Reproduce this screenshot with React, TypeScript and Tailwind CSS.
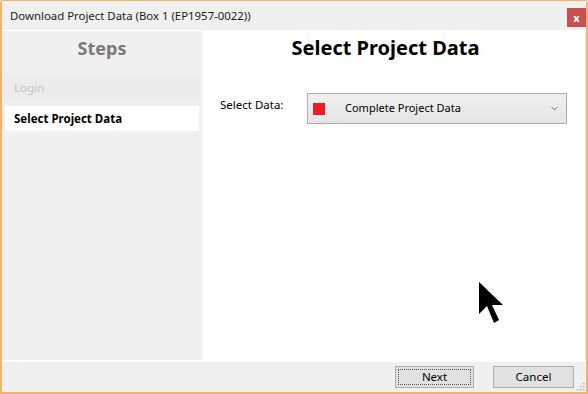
import { ChevronDown } from "lucide-react";

const font = { fontFamily: '"Noto Sans", "Open Sans", sans-serif' };

function Cursor() {
  return (
    <svg
      className="absolute left-[477px] top-[281px]"
      width="26"
      height="42"
      viewBox="0 0 26 42"
    >
      <polygon
        points="0,0 0,32 8,24 15,41 20,38 13,23 24,23"
        fill="#000"
      />
    </svg>
  );
}

export default function App() {
  return (
    <div
      className="relative flex h-[394px] w-[588px] flex-col overflow-hidden rounded-t-[3px] border-x-2 border-t border-b-2 border-[#f2b36a] bg-white text-[11.5px] text-black"
      style={font}
    >
      {/* title bar */}
      <div className="flex h-[29px] shrink-0 items-center justify-between bg-[#f0f0f0] pl-[8px]">
        <span className="text-[11.4px] text-[#1a1a1a]">
          Download Project Data (Box 1 (EP1957-0022))
        </span>
        <div className="mb-[-3px] flex h-[19px] w-[19px] items-center justify-center bg-[#c75050] text-[11px] font-bold leading-none text-white">
          x
        </div>
      </div>
      <div className="h-px shrink-0 bg-white" />

      {/* main */}
      <div className="flex h-[329px] shrink-0">
        <div className="flex w-[200px] shrink-0 flex-col bg-[#f0f0f0] px-[3px]">
          <div className="pt-[5px] text-center text-[18px] font-bold leading-[24px] text-[#7a7a7a]">
            Steps
          </div>
          <div className="mt-[16px] flex h-[24px] items-center bg-[#ececec] pl-[9px] text-[#c4c4c4]">
            Login
          </div>
          <div className="mt-[6px] flex h-[25px] items-center bg-white pl-[9px] font-bold">
            Select Project Data
          </div>
        </div>
        <div className="w-px shrink-0 bg-[#f7f7f7]" />
        <div className="flex flex-1 flex-col border-r border-[#e8e8e8] bg-white">
          <div className="pr-[17px] pt-[3px] text-center text-[20px] font-bold leading-[28px]">
            Select Project Data
          </div>
          <div className="mt-[31px] flex items-start pl-[17px]">
            <span className="w-[87px] pt-[3px]">Select Data:</span>
            <div className="flex h-[31px] w-[260px] items-center border border-[#acacac] bg-gradient-to-b from-[#f0f0f0] to-[#e5e5e5] pl-[5px] pr-[6px]">
              <div className="h-[12px] w-[12px] bg-[#ed1c24]" />
              <span className="ml-[20px] flex-1 text-[11px]">Complete Project Data</span>
              <ChevronDown size={11} strokeWidth={2} className="text-[#606060]" />
            </div>
          </div>
        </div>
      </div>
      <div className="h-[2px] shrink-0 bg-white" />

      {/* bottom bar */}
      <div className="relative flex h-[30px] shrink-0 items-center justify-end gap-[19px] bg-[#f0f0f0] pr-[12px]">
        <button className="mb-[1px] flex h-[22px] w-[79px] items-center justify-center border border-[#adadad] bg-[#e1e1e1] p-[2px]">
          <span className="flex h-full w-full items-center justify-center border border-dotted border-[#555]">
            Next
          </span>
        </button>
        <button className="mb-[1px] flex h-[22px] w-[81px] items-center justify-center border border-[#adadad] bg-[#e1e1e1]">
          Cancel
        </button>
        <svg
          className="absolute bottom-[1px] right-[1px]"
          width="8"
          height="8"
          viewBox="0 0 8 8"
        >
          <g fill="#b8b8b8">
            <rect x="6" y="0" width="1.5" height="1.5" />
            <rect x="3" y="3" width="1.5" height="1.5" />
            <rect x="6" y="3" width="1.5" height="1.5" />
            <rect x="0" y="6" width="1.5" height="1.5" />
            <rect x="3" y="6" width="1.5" height="1.5" />
            <rect x="6" y="6" width="1.5" height="1.5" />
          </g>
        </svg>
      </div>

      <Cursor />
    </div>
  );
}
